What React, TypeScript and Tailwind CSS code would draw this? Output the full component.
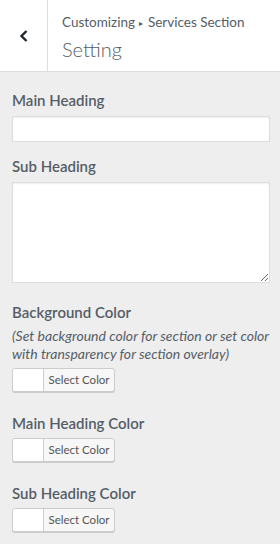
import React from 'react';

const font = { fontFamily: 'Lato, "Noto Sans", sans-serif' };

interface ColorFieldProps {
  label: string;
  description?: string;
}

const ColorField: React.FC<ColorFieldProps> = ({ label, description }) => {
  return (
    <div>
      <div className="text-[15px] leading-[20px] font-semibold text-[#555d66]">{label}</div>
      {description && (
        <div className="mt-[5px] text-[14px] leading-[18px] italic text-[#555d66]">{description}</div>
      )}
      <button className="mt-[5px] flex h-[24px] w-[103px] overflow-hidden rounded-[3px] border border-[#cccccc] bg-[#f7f7f7] shadow-[0_1px_0_#cccccc]">
        <span className="h-full w-[31px] border-r border-[#cccccc] bg-white" />
        <span className="flex h-full flex-1 items-center justify-center text-[11.5px] text-[#555555]">
          Select Color
        </span>
      </button>
    </div>
  );
};

export default function App() {
  return (
    <div className="h-[544px] w-[280px] overflow-hidden bg-[#eeeeee]" style={font}>
      {/* header */}
      <div className="flex h-[72px] border-b border-[#dddddd] bg-white">
        <button className="flex w-[48px] items-center justify-center border-r border-[#dddddd]">
          <svg width="10" height="14" viewBox="0 0 10 14">
            <polyline points="7.5,2 2.5,7 7.5,12" fill="none" stroke="#23282d" strokeWidth="2.4" />
          </svg>
        </button>
        <div className="flex flex-col justify-center pl-[14px] pt-[3px]">
          <div className="text-[13.5px] leading-[18px] text-[#555d66]">
            Customizing <span className="mx-[1px] text-[8px] align-[1px]">▸</span> Services Section
          </div>
          <div className="mt-[4px] text-[20px] leading-[26px] font-light text-[#555d66]">Setting</div>
        </div>
      </div>

      {/* controls */}
      <div className="pl-3 pr-[10px] pt-[18px]">
        <div className="text-[15px] leading-[20px] font-semibold text-[#555d66]">Main Heading</div>
        <input
          type="text"
          className="mt-[6px] block h-[26px] w-full border border-[#dddddd] bg-white shadow-[inset_0_1px_2px_rgba(0,0,0,0.07)] outline-none"
        />

        <div className="mt-[14px] text-[15px] leading-[20px] font-semibold text-[#555d66]">Sub Heading</div>
        <textarea className="mt-[6px] block h-[101px] w-full border border-[#dddddd] bg-white shadow-[inset_0_1px_2px_rgba(0,0,0,0.07)] outline-none" />

        <div className="mt-[19px] flex flex-col gap-[21px]">
          <ColorField
            label="Background Color"
            description="(Set background color for section or set color with transparency for section overlay)"
          />
          <ColorField label="Main Heading Color" />
          <ColorField label="Sub Heading Color" />
        </div>
      </div>
    </div>
  );
}
